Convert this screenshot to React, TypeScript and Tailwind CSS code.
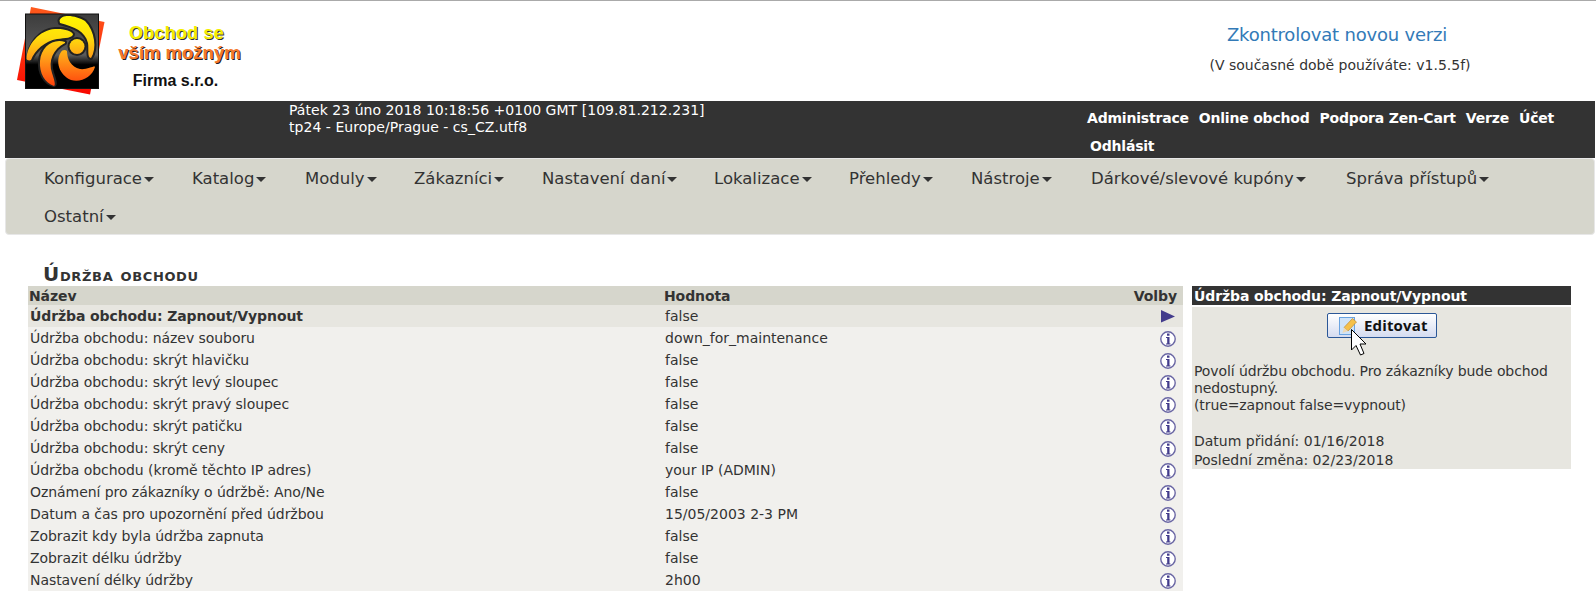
import clsx from "clsx";

const userLinks = ["Administrace", "Online obchod", "Podpora Zen-Cart", "Verze", "Účet", "Odhlásit"];

const menu = [
  { label: "Konfigurace", width: "w-[148px]" },
  { label: "Katalog", width: "w-[113px]" },
  { label: "Moduly", width: "w-[109px]" },
  { label: "Zákazníci", width: "w-[128px]" },
  { label: "Nastavení daní", width: "w-[172px]" },
  { label: "Lokalizace", width: "w-[135px]" },
  { label: "Přehledy", width: "w-[122px]" },
  { label: "Nástroje", width: "w-[120px]" },
  { label: "Dárkové/slevové kupóny", width: "w-[255px]" },
  { label: "Správa přístupů", width: "w-[183px]" },
  { label: "Ostatní", width: "w-[120px]" },
];

const rows = [
  ["Údržba obchodu: Zapnout/Vypnout", "false"],
  ["Údržba obchodu: název souboru", "down_for_maintenance"],
  ["Údržba obchodu: skrýt hlavičku", "false"],
  ["Údržba obchodu: skrýt levý sloupec", "false"],
  ["Údržba obchodu: skrýt pravý sloupec", "false"],
  ["Údržba obchodu: skrýt patičku", "false"],
  ["Údržba obchodu: skrýt ceny", "false"],
  ["Údržba obchodu (kromě těchto IP adres)", "your IP (ADMIN)"],
  ["Oznámení pro zákazníky o údržbě: Ano/Ne", "false"],
  ["Datum a čas pro upozornění před údržbou", "15/05/2003 2-3 PM"],
  ["Zobrazit kdy byla údržba zapnuta", "false"],
  ["Zobrazit délku údržby", "false"],
  ["Nastavení délky údržby", "2h00"],
];

function Logo() {
  return (
    <svg width="90" height="90" viewBox="0 0 90 90" className="shrink-0">
      <defs>
        <linearGradient id="red" x1="0" y1="0" x2="0" y2="1">
          <stop offset="0" stopColor="#ff5a1c" />
          <stop offset="1" stopColor="#f80800" />
        </linearGradient>
        <linearGradient id="tile" x1="0" y1="0" x2="0" y2="1">
          <stop offset="0" stopColor="#3c3c3c" />
          <stop offset="0.55" stopColor="#5c5c5c" />
          <stop offset="0.68" stopColor="#000" />
        </linearGradient>
        <linearGradient id="flame" gradientUnits="userSpaceOnUse" x1="0" y1="10" x2="0" y2="80">
          <stop offset="0" stopColor="#fff600" />
          <stop offset="0.3" stopColor="#ffdc0c" />
          <stop offset="0.6" stopColor="#ff9a18" />
          <stop offset="1" stopColor="#ff3e0c" />
        </linearGradient>
      </defs>
      <path d="M14 0 L87.500 15 L73 87.500 L0 73 Z" fill="url(#red)" />
      <rect x="8.500" y="7" width="73" height="74.500" fill="url(#tile)" stroke="#111" />
      <g stroke="#222" strokeWidth="4" fill="#222" strokeLinejoin="round">
        <circle cx="60" cy="39.500" r="7.500" />
        <path d="M42.500 13.500 C45 6 60 9 68 14 C78 24 80 42 74 51 C70 51 72 42 71 36 C68 24 58 20 43 16 Z" />
        <path d="M11 52 C12 38 22 23 38 22 C48 21.500 54 24 56 27 C56 31 48 31 40 32 C28 34 18 43 14 53 Z" />
        <path d="M48 35 C36 31 24 40 23 54 C22 66 28 76 37 78 C39 77 37 72 35 66 C31 54 36 42 48 36 Z" />
      </g>
      <g fill="url(#flame)">
        <circle cx="60" cy="39.500" r="7.500" />
        <path d="M42.500 13.500 C45 6 60 9 68 14 C78 24 80 42 74 51 C70 51 72 42 71 36 C68 24 58 20 43 16 Z" />
        <path d="M9.500 52 C10 38 22 23 38 22 C48 21.500 54 24 56 27 C56 31 48 31 40 32 C28 34 18 43 14 53 C12 54 10 53 9.500 52 Z" />
        <path d="M48 35 C36 31 24 40 23 54 C22 66 28 76 37 79 C39 78 37 72 35 66 C31 54 36 42 48 36 Z" />
        <path d="M44 45 C38 54 42 68 54 73 C64 76 75 70 78 60 C78 58 70 63 63 62 C54 60 50 52 50 44 C48 42 45 43 44 45 Z" />
      </g>
    </svg>
  );
}

function InfoIcon() {
  return (
    <svg width="16" height="16" viewBox="0 0 16 16" className="mt-0.5">
      <circle cx="8" cy="8" r="7.200" fill="#fff" stroke="#6a66a4" strokeWidth="1.400" />
      <path d="M7 2.500h2.500v2.200H7zM6 6h3.500v6.500h1v1H6v-1h1.200V7H6z" fill="#433c8c" />
    </svg>
  );
}

function Caret() {
  return <span className="ml-0.5 border-x-[5px] border-t-[5px] border-x-transparent border-t-[#333]" />;
}

function EditIcon() {
  return (
    <svg width="20" height="20" viewBox="0 0 20 20">
      <rect x="1.500" y="1.500" width="15" height="17" fill="#cfe3f8" stroke="#6aa3e0" />
      <path d="M6 11.500 L14.500 2.500 L18.500 6 L10 15 Z" fill="#f5c04a" stroke="#c08a30" strokeWidth="0.700" />
      <path d="M6 11.500 L10 15 L4.500 17 Z" fill="#eed9b4" />
    </svg>
  );
}

function Cursor() {
  return (
    <svg width="17" height="27" viewBox="0 0 17 27" className="absolute left-[23px] top-[15px]">
      <path d="M0.500 0.500 V21 L5 16.500 L9.500 26 L13 24.500 L9 15 H15 Z" fill="#fff" stroke="#000" />
    </svg>
  );
}

function App() {
  return (
    <div className="h-[604px] w-[1596px] overflow-hidden border-t border-[#aaa] bg-white pl-[5px] pr-px font-['DejaVu_Sans',sans-serif] text-[14px] text-[#333]">
      <div className="flex h-[100px] justify-between">
        <div className="flex pl-3 pt-1.5">
          <Logo />
          <div className="flex w-[145px] flex-col items-center pt-4 font-['Liberation_Sans',sans-serif] font-bold">
            <div className="-ml-1.5 text-[18px] leading-[20px] tracking-[0.2px] text-[#f4ee00] [text-shadow:1px_1px_0_#333]">
              Obchod se
            </div>
            <div className="text-[18.5px] leading-[20px] text-[#f4782a] [text-shadow:1px_1px_0_#222]">vším možným</div>
            <div className="-ml-2 mt-[7px] text-[16px] leading-[22px] text-[#111]">Firma s.r.o.</div>
          </div>
        </div>
        <div className="w-[510px] pt-5 text-center">
          <div className="-ml-1.5 text-[18px] leading-[28px] tracking-[-0.2px] text-[#337ab7]">Zkontrolovat novou verzi</div>
          <div className="mt-1 leading-[24px]">(V současné době používáte: v1.5.5f)</div>
        </div>
      </div>

      <div className="flex h-[57px] justify-between bg-[#333] text-white">
        <div className="pl-[284px] pt-px leading-[17px] tracking-[0.04px]">
          <div>Pátek 23 úno 2018 10:18:56 +0100 GMT [109.81.212.231]</div>
          <div>tp24 - Europe/Prague - cs_CZ.utf8</div>
        </div>
        <div className="flex w-[508px] flex-wrap content-start gap-x-2.5 pt-[3px] font-bold leading-[28px] tracking-[-0.2px]">
          {userLinks.map((link) => (
            <a key={link} className="last:ml-[3px]">
              {link}
            </a>
          ))}
        </div>
      </div>

      <div className="flex h-[77px] flex-wrap content-start rounded border border-[#e7e7e7] bg-[#d6d6cc] pl-[38px] pt-px text-[16.5px]">
        {menu.map((item) => (
          <div key={item.label} className={clsx("flex h-[38px] items-center whitespace-nowrap", item.width)}>
            {item.label}
            <Caret />
          </div>
        ))}
      </div>

      <div className="flex pl-[23px] pt-[24px]">
        <div className="w-[1155px]">
          <h1 className="h-[27px] pl-[15px] text-[18.5px] font-bold leading-[30px] tracking-[0.65px] [font-variant:small-caps] first-letter:text-[20px]">
            Údržba obchodu
          </h1>
          <div className="flex h-[19px] items-center bg-[#d6d6cc] px-px pt-px font-bold tracking-[-0.1px]">
            <div className="w-[635px]">Název</div>
            <div className="flex-1">Hodnota</div>
            <div className="pr-[5px]">Volby</div>
          </div>
          {rows.map(([name, value], i) => (
            <div key={name} className={clsx("flex h-[22px] items-center px-0.5", i === 0 ? "bg-[#e7e6e0]" : "bg-[#f1f0ed]")}>
              <div className={clsx("w-[635px]", i === 0 ? "font-bold tracking-[-0.1px]" : "tracking-[-0.06px]")}>{name}</div>
              <div className="flex-1">{value}</div>
              <div className="pr-[5px]">
                {i === 0 ? (
                  <svg width="16" height="16" viewBox="0 0 16 16">
                    <path d="M1 2 L15 8.500 L1 14.500 Z" fill="#433c8c" />
                  </svg>
                ) : (
                  <InfoIcon />
                )}
              </div>
            </div>
          ))}
        </div>

        <div className="ml-[9px] mt-[27px] w-[379px]">
          <div className="h-[19px] bg-[#333] pl-0.5 pt-px font-bold leading-[19px] tracking-[-0.1px] text-white">
            Údržba obchodu: Zapnout/Vypnout
          </div>
          <div className="mt-0.5 h-[162px] bg-[#e7e6e0] pl-0.5 pt-1.5">
            <div className="relative ml-[133px] flex h-[25px] w-[110px] items-center rounded-[2px] border border-[#2b5797] bg-gradient-to-b from-white to-[#d5dcf0] pl-2.5">
              <EditIcon />
              <span className="ml-1.5 font-['Open_Sans',sans-serif] text-[15px] font-bold tracking-[0.15px] text-[#111]">
                Editovat
              </span>
              <Cursor />
            </div>
            <div className="mt-[25px] leading-[17px] tracking-[-0.1px]">
              Povolí údržbu obchodu. Pro zákazníky bude obchod
              <br />
              nedostupný.
              <br />
              (true=zapnout false=vypnout)
            </div>
            <div className="mt-[18px] leading-[19px]">
              <div>Datum přidání: 01/16/2018</div>
              <div>Poslední změna: 02/23/2018</div>
            </div>
          </div>
        </div>
      </div>
    </div>
  );
}

export default App;
